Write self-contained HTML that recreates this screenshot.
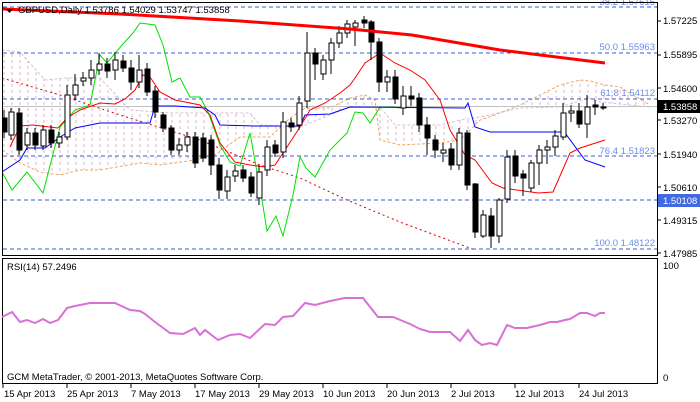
<!DOCTYPE html>
<html><head><meta charset="utf-8"><style>
body{margin:0;background:#fff;}
svg{display:block;font-family:"Liberation Sans",sans-serif;font-size:9.5px;}
</style></head><body>
<svg width="700" height="402" viewBox="0 0 700 402" xmlns="http://www.w3.org/2000/svg">
<defs>
<pattern id="hatch" width="8" height="6" patternUnits="userSpaceOnUse" x="3">
<line x1="1" y1="0" x2="1" y2="3" stroke="#d8b8c8" stroke-width="1"/>
</pattern>
<clipPath id="main"><rect x="3" y="3" width="654" height="252"/></clipPath>
</defs>
<rect width="700" height="402" fill="#fff"/>
<g clip-path="url(#main)">
<polygon fill="url(#hatch)" points="2,50 20,52 45,80 65,78 100,78 130,110 170,113 250,113 260,125 300,127 350,107 380,107 395,125 440,125 460,120 480,117 520,108 560,107 590,98 600,102 650,107 650,105 620,87 605,85 590,81 580,80 560,85 540,95 520,105 495,115 480,120 460,140 440,143 400,145 380,140 375,100 365,95 350,98 330,108 305,108 290,118 270,137 240,137 215,155 195,160 160,165 140,163 100,170 80,170 60,175 40,172 20,163 2,150"/>
<polyline fill="none" stroke="#d8bfd8" stroke-dasharray="3,2" points="2,50 20,52 45,80 65,78 100,78 130,110 170,113 250,113 260,125 300,127 350,107 380,107 395,125 440,125 460,120 480,117 520,108 560,107 590,98 600,102 650,107"/>
<polyline fill="none" stroke="#f4a460" stroke-dasharray="3,2" points="2,150 20,163 40,172 60,175 80,170 100,170 140,163 160,165 195,160 215,155 240,137 270,137 290,118 305,108 330,108 350,98 365,95 375,100 380,140 400,145 440,143 460,140 480,120 495,115 520,105 540,95 560,85 580,80 590,81 605,85 620,87 650,105"/>
<g stroke="#3a5fd8" stroke-dasharray="4,3" stroke-width="1">
<line x1="3" y1="7" x2="657" y2="7"/>
<line x1="3" y1="53" x2="657" y2="53"/>
<line x1="3" y1="99" x2="657" y2="99"/>
<line x1="3" y1="156" x2="657" y2="156"/>
<line x1="3" y1="200" x2="657" y2="200"/>
<line x1="3" y1="249" x2="657" y2="249"/>
</g>
<line x1="3" y1="106.5" x2="657" y2="106.5" stroke="#c0c0c0"/>
<polyline fill="none" stroke="#e00000" stroke-dasharray="2,3" points="2,78 60,95 120,115 200,140 260,165 300,178 347,200 400,222 475,250"/>
<polyline fill="none" stroke="#00e000" stroke-width="1" points="2,172 12,190 27,172 43,193 60,127 75,110 90,105 100,55 107,63 122,45 133,33 140,23 155,25 163,45 172,82 180,78 190,97 200,97 208,112 220,145 230,162 240,166 250,133 262,200 267,231 276,216 283,236 293,195 300,157 306,168 315,177 330,150 347,133 350,125 355,112 363,113 370,123 380,107 393,107 400,108"/>
<polyline fill="none" stroke="#0000ff" points="2,172 20,160 27,148 45,148 60,137 75,128 100,123 150,123 155,106 175,106 205,108 215,115 220,125 255,126 300,126 305,115 330,114 350,107 465,108 468,103 475,127 490,132 560,132 565,133 585,160 605,167"/>
<polyline fill="none" stroke="#ff0000" points="10,147 20,126 33,125 58,128 67,118 80,110 100,103 115,104 125,99 135,90 143,75 150,77 160,92 175,100 200,105 210,115 220,143 235,162 250,165 265,167 275,165 285,150 300,127 310,110 325,103 340,93 350,85 355,78 365,63 380,53 395,63 410,70 425,80 440,100 450,130 465,155 475,160 492,183 503,188 538,193 553,192 570,153 580,148 605,140"/>
<g stroke="#000" stroke-width="1" shape-rendering="crispEdges">
<g fill="#000">
<line x1="4" y1="110" x2="4" y2="138"/><rect x="2" y="118" width="5" height="14"/>
<line x1="19" y1="108" x2="19" y2="155"/><rect x="17" y="113" width="5" height="37"/>
<line x1="35" y1="128" x2="35" y2="150"/><rect x="33" y="133" width="5" height="12"/>
<line x1="51" y1="125" x2="51" y2="148"/><rect x="49" y="130" width="5" height="13"/>
<line x1="107" y1="58" x2="107" y2="78"/><rect x="105" y="64" width="5" height="7"/>
<line x1="123" y1="55" x2="123" y2="72"/><rect x="121" y="61" width="5" height="7"/>
<line x1="131" y1="60" x2="131" y2="90"/><rect x="129" y="68" width="5" height="14"/>
<line x1="147" y1="63" x2="147" y2="96"/><rect x="145" y="69" width="5" height="23"/>
<line x1="155" y1="86" x2="155" y2="118"/><rect x="153" y="91" width="5" height="21"/>
<line x1="163" y1="112" x2="163" y2="132"/><rect x="161" y="115" width="5" height="13"/>
<line x1="171" y1="125" x2="171" y2="155"/><rect x="169" y="128" width="5" height="22"/>
<line x1="195" y1="132" x2="195" y2="168"/><rect x="193" y="137" width="5" height="26"/>
<line x1="203" y1="133" x2="203" y2="162"/><rect x="201" y="138" width="5" height="20"/>
<line x1="211" y1="135" x2="211" y2="175"/><rect x="209" y="140" width="5" height="25"/>
<line x1="219" y1="158" x2="219" y2="199"/><rect x="217" y="165" width="5" height="25"/>
<line x1="243" y1="165" x2="243" y2="182"/><rect x="241" y="170" width="5" height="8"/>
<line x1="251" y1="172" x2="251" y2="197"/><rect x="249" y="177" width="5" height="16"/>
<line x1="275" y1="140" x2="275" y2="157"/><rect x="273" y="145" width="5" height="8"/>
<line x1="291" y1="118" x2="291" y2="132"/><rect x="289" y="123" width="5" height="4"/>
<line x1="315" y1="48" x2="315" y2="80"/><rect x="313" y="53" width="5" height="11"/>
<line x1="364" y1="16" x2="364" y2="28"/><rect x="362" y="20" width="5" height="3"/>
<line x1="371" y1="20" x2="371" y2="60"/><rect x="369" y="22" width="5" height="20"/>
<line x1="379" y1="38" x2="379" y2="92"/><rect x="377" y="42" width="5" height="40"/>
<line x1="395" y1="70" x2="395" y2="104"/><rect x="393" y="77" width="5" height="22"/>
<line x1="411" y1="86" x2="411" y2="106"/><rect x="409" y="96" width="5" height="3"/>
<line x1="419" y1="93" x2="419" y2="132"/><rect x="417" y="98" width="5" height="27"/>
<line x1="427" y1="117" x2="427" y2="155"/><rect x="425" y="125" width="5" height="13"/>
<line x1="435" y1="135" x2="435" y2="158"/><rect x="433" y="140" width="5" height="10"/>
<line x1="451" y1="143" x2="451" y2="170"/><rect x="449" y="149" width="5" height="16"/>
<line x1="467" y1="130" x2="467" y2="190"/><rect x="465" y="133" width="5" height="52"/>
<line x1="475" y1="183" x2="475" y2="238"/><rect x="473" y="184" width="5" height="48"/>
<line x1="491" y1="208" x2="491" y2="248"/><rect x="489" y="216" width="5" height="20"/>
<line x1="515" y1="150" x2="515" y2="183"/><rect x="513" y="156" width="5" height="20"/>
<line x1="523" y1="170" x2="523" y2="196"/><rect x="521" y="174" width="5" height="4"/>
<line x1="579" y1="103" x2="579" y2="128"/><rect x="577" y="111" width="5" height="13"/>
<line x1="595" y1="100" x2="595" y2="115"/><rect x="593" y="105" width="5" height="2"/>
</g>
<g fill="#fff">
<line x1="11" y1="108" x2="11" y2="140"/><rect x="9" y="112" width="5" height="23"/>
<line x1="27" y1="128" x2="27" y2="150"/><rect x="25" y="133" width="5" height="12"/>
<line x1="43" y1="125" x2="43" y2="150"/><rect x="41" y="130" width="5" height="16"/>
<line x1="59" y1="132" x2="59" y2="148"/><rect x="57" y="137" width="5" height="6"/>
<line x1="67" y1="85" x2="67" y2="140"/><rect x="65" y="95" width="5" height="42"/>
<line x1="75" y1="74" x2="75" y2="100"/><rect x="73" y="85" width="5" height="10"/>
<line x1="83" y1="72" x2="83" y2="86"/><rect x="81" y="78" width="5" height="3"/>
<line x1="91" y1="60" x2="91" y2="85"/><rect x="89" y="70" width="5" height="8"/>
<line x1="99" y1="53" x2="99" y2="75"/><rect x="97" y="64" width="5" height="6"/>
<line x1="115" y1="52" x2="115" y2="80"/><rect x="113" y="60" width="5" height="10"/>
<line x1="139" y1="55" x2="139" y2="88"/><rect x="137" y="70" width="5" height="12"/>
<line x1="179" y1="138" x2="179" y2="155"/><rect x="177" y="145" width="5" height="5"/>
<line x1="187" y1="132" x2="187" y2="152"/><rect x="185" y="137" width="5" height="8"/>
<line x1="227" y1="170" x2="227" y2="199"/><rect x="225" y="177" width="5" height="14"/>
<line x1="235" y1="165" x2="235" y2="182"/><rect x="233" y="171" width="5" height="5"/>
<line x1="259" y1="165" x2="259" y2="205"/><rect x="257" y="172" width="5" height="26"/>
<line x1="267" y1="140" x2="267" y2="176"/><rect x="265" y="147" width="5" height="23"/>
<line x1="283" y1="112" x2="283" y2="158"/><rect x="281" y="122" width="5" height="30"/>
<line x1="299" y1="96" x2="299" y2="130"/><rect x="297" y="103" width="5" height="22"/>
<line x1="307" y1="32" x2="307" y2="108"/><rect x="305" y="53" width="5" height="48"/>
<line x1="323" y1="55" x2="323" y2="80"/><rect x="321" y="60" width="5" height="14"/>
<line x1="331" y1="38" x2="331" y2="74"/><rect x="329" y="43" width="5" height="17"/>
<line x1="339" y1="26" x2="339" y2="48"/><rect x="337" y="33" width="5" height="10"/>
<line x1="347" y1="20" x2="347" y2="38"/><rect x="345" y="24" width="5" height="9"/>
<line x1="355" y1="20" x2="355" y2="46"/><rect x="353" y="23" width="5" height="4"/>
<line x1="387" y1="70" x2="387" y2="92"/><rect x="385" y="77" width="5" height="5"/>
<line x1="403" y1="86" x2="403" y2="115"/><rect x="401" y="96" width="5" height="12"/>
<line x1="443" y1="143" x2="443" y2="162"/><rect x="441" y="150" width="5" height="3"/>
<line x1="459" y1="128" x2="459" y2="170"/><rect x="457" y="133" width="5" height="32"/>
<line x1="483" y1="210" x2="483" y2="238"/><rect x="481" y="215" width="5" height="21"/>
<line x1="499" y1="198" x2="499" y2="243"/><rect x="497" y="200" width="5" height="36"/>
<line x1="507" y1="150" x2="507" y2="203"/><rect x="505" y="157" width="5" height="42"/>
<line x1="531" y1="160" x2="531" y2="192"/><rect x="529" y="163" width="5" height="25"/>
<line x1="539" y1="145" x2="539" y2="185"/><rect x="537" y="150" width="5" height="13"/>
<line x1="547" y1="140" x2="547" y2="164"/><rect x="545" y="147" width="5" height="3"/>
<line x1="555" y1="130" x2="555" y2="156"/><rect x="553" y="136" width="5" height="11"/>
<line x1="563" y1="103" x2="563" y2="140"/><rect x="561" y="113" width="5" height="24"/>
<line x1="571" y1="105" x2="571" y2="122"/><rect x="569" y="111" width="5" height="2"/>
<line x1="587" y1="95" x2="587" y2="138"/><rect x="585" y="107" width="5" height="17"/>
<line x1="603" y1="103" x2="603" y2="110"/><rect x="601" y="107" width="5" height="1"/>
</g>
</g>
<polyline fill="none" stroke="#ff0000" stroke-width="3" points="2,9 120,14 240,21 350,29 412,35 500,50 605,63"/>
</g>
<text x="18" y="13" fill="#000">GBPUSD,Daily  1.53786 1.54029 1.53747 1.53858</text>
<polygon points="6,9 13,9 9.5,13" fill="#000"/>
<g fill="#6a8ee8" text-anchor="end">
<text x="655" y="5">38.2 1.57615</text>
<text x="655" y="50">50.0 1.55963</text>
<text x="655" y="96">61.8 1.54112</text>
<text x="655" y="154">76.4 1.51823</text>
<text x="655" y="246">100.0 1.48122</text>
</g>
<rect x="2.5" y="2.5" width="655" height="253" fill="none" stroke="#000"/>
<rect x="2.5" y="258.5" width="655" height="125" fill="none" stroke="#000"/>
<g fill="#000">
<text x="663" y="24">1.57225</text>
<text x="663" y="58">1.55895</text>
<text x="663" y="92">1.54600</text>
<text x="663" y="124">1.53270</text>
<text x="663" y="158">1.51940</text>
<text x="663" y="191">1.50610</text>
<text x="663" y="224">1.49315</text>
<text x="663" y="257">1.47985</text>
<text x="663" y="269">100</text>
<text x="663" y="381">0</text>
</g>
<g stroke="#000"><line x1="658" y1="21" x2="661" y2="21"/><line x1="658" y1="55" x2="661" y2="55"/><line x1="658" y1="88" x2="661" y2="88"/><line x1="658" y1="120" x2="661" y2="120"/><line x1="658" y1="154" x2="661" y2="154"/><line x1="658" y1="187" x2="661" y2="187"/><line x1="658" y1="220" x2="661" y2="220"/><line x1="658" y1="253" x2="661" y2="253"/></g>
<rect x="658" y="100" width="42" height="13" fill="#000"/>
<text x="663" y="110" fill="#fff">1.53858</text>
<rect x="658" y="194" width="42" height="13" fill="#4169e1"/>
<text x="663" y="204" fill="#fff">1.50108</text>
<text x="7" y="270" fill="#000">RSI(14) 57.2496</text>
<polyline fill="none" stroke="#da70d6" stroke-width="2" points="2,317 12,312 20,322 27,320 35,323 43,319 50,323 58,320 67,308 75,306 90,303 105,303 115,303 130,310 140,311 145,314 155,322 170,333 183,334 195,328 200,335 205,330 218,340 230,335 240,334 250,338 265,324 275,325 283,317 293,316 305,303 315,305 330,301 345,298 363,298 378,317 393,317 410,324 420,329 430,332 450,332 460,341 468,330 475,340 482,345 490,343 497,345 507,325 515,328 527,328 540,325 550,322 557,322 565,320 570,319 580,313 587,313 595,316 600,313 605,313"/>
<text x="7" y="380" fill="#000">GCM MetaTrader, © 2001-2013, MetaQuotes Software Corp.</text>
<g stroke="#000"><line x1="3" y1="384" x2="3" y2="388"/><line x1="67" y1="384" x2="67" y2="388"/><line x1="131" y1="384" x2="131" y2="388"/><line x1="195" y1="384" x2="195" y2="388"/><line x1="259" y1="384" x2="259" y2="388"/><line x1="323" y1="384" x2="323" y2="388"/><line x1="387" y1="384" x2="387" y2="388"/><line x1="451" y1="384" x2="451" y2="388"/><line x1="515" y1="384" x2="515" y2="388"/><line x1="579" y1="384" x2="579" y2="388"/></g>
<g fill="#000">
<text x="4" y="397">15 Apr 2013</text>
<text x="67" y="397">25 Apr 2013</text>
<text x="131" y="397">7 May 2013</text>
<text x="195" y="397">17 May 2013</text>
<text x="259" y="397">29 May 2013</text>
<text x="323" y="397">10 Jun 2013</text>
<text x="387" y="397">20 Jun 2013</text>
<text x="451" y="397">2 Jul 2013</text>
<text x="515" y="397">12 Jul 2013</text>
<text x="579" y="397">24 Jul 2013</text>
</g>
</svg>
</body></html>
